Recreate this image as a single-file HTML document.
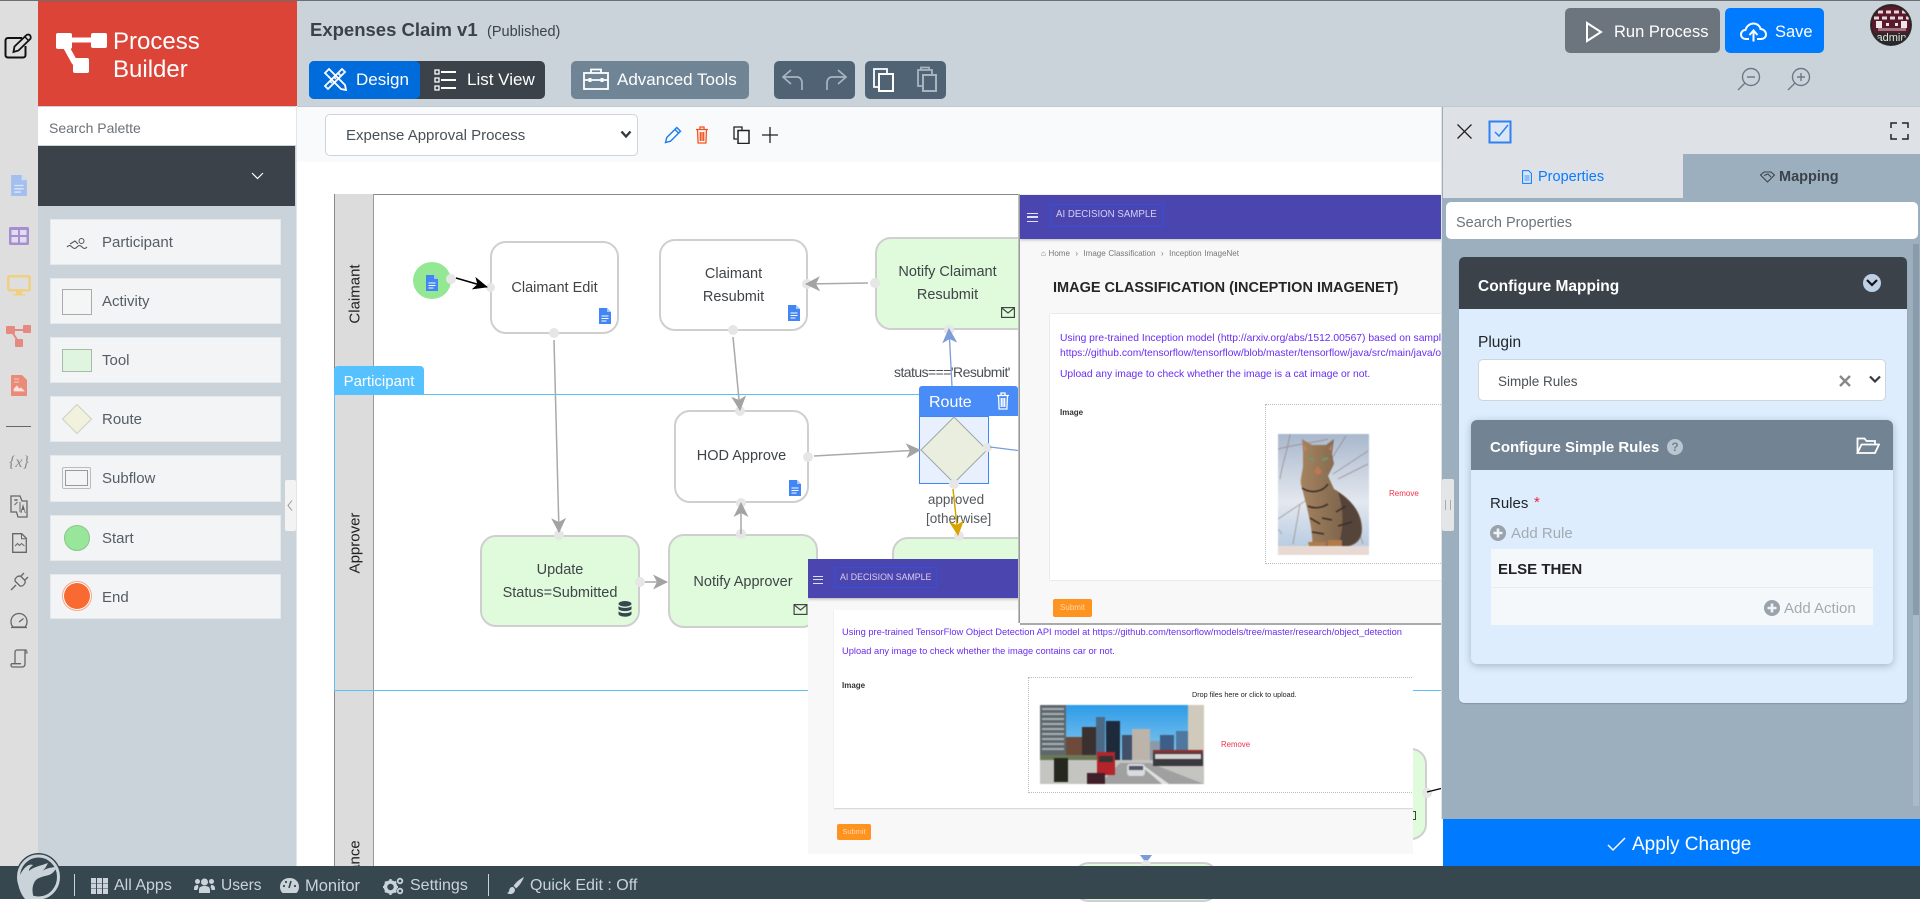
<!DOCTYPE html>
<html><head><meta charset="utf-8"><title>Process Builder</title>
<style>
*{box-sizing:border-box}
html,body{margin:0;padding:0;width:1920px;height:899px;overflow:hidden;background:#fff;font-family:"Liberation Sans",sans-serif}
.a{position:absolute;white-space:nowrap}
.btn{border-radius:5px;color:#fff}
.pal{position:absolute;left:50px;width:231px;background:#f2f4f6;box-shadow:0 0 0 1px #e6e9ec inset;color:#555d64;font-size:15px}
.pal span{position:absolute;left:52px;top:1px;line-height:46px}
.node{position:absolute;border:2.500px solid #cfcfcf;border-radius:16px;background:#fff;color:#3f4448;font-size:14.500px;text-align:center;line-height:23px}
.g{background:#e0fbdc}
.pt{position:absolute;width:10px;height:10px;border-radius:50%;background:#e6e6e6}
.pur{color:#6a2df0}
</style></head>
<body>
<svg width="0" height="0" style="position:absolute">
<defs>
<symbol id="doc" viewBox="0 0 12 16"><path d="M0 0h8l4 4v12H0z" fill="#4285f4"/><path d="M8 0v4h4z" fill="#a9c6fa"/><path d="M2.500 8h7M2.500 10.500h7M2.500 13h5" stroke="#fff" stroke-width="1"/></symbol>
<symbol id="env" viewBox="0 0 14 11"><rect x=".6" y=".6" width="12.8" height="9.8" fill="none" stroke="#444" stroke-width="1.2"/><path d="M.6.8 7 6 13.4.8" fill="none" stroke="#444" stroke-width="1.2"/></symbol>
<symbol id="trash" viewBox="0 0 14 18"><path d="M1 3.500h12M5 3.500V1h4v2.500M2.500 3.500l.6 13.500h7.800l.6-13.500M5.300 6v9M7 6v9M8.700 6v9" fill="none" stroke="currentColor" stroke-width="1.300"/></symbol>
<symbol id="plusc" viewBox="0 0 16 16"><circle cx="8" cy="8" r="8" fill="#9aa3ab"/><path d="M8 3.500v9M3.500 8h9" stroke="#eef3f7" stroke-width="2.600"/></symbol>
<marker id="mg" markerUnits="userSpaceOnUse" markerWidth="16" markerHeight="16" refX="14" refY="8" orient="auto"><path d="M0 0.500 15 8 0 15.500 4 8z" fill="#a3a3a3"/></marker>
<marker id="mk" markerUnits="userSpaceOnUse" markerWidth="16" markerHeight="16" refX="14" refY="8" orient="auto"><path d="M0 1.500 15 8 0 14.500 4 8z" fill="#000"/></marker>
<marker id="mb" markerUnits="userSpaceOnUse" markerWidth="16" markerHeight="16" refX="14" refY="8" orient="auto"><path d="M0 0.500 15 8 0 15.500 4 8z" fill="#7a9cd8"/></marker>
<marker id="my" markerUnits="userSpaceOnUse" markerWidth="16" markerHeight="16" refX="14" refY="8" orient="auto"><path d="M0 0.500 15 8 0 15.500 4 8z" fill="#d9a400"/></marker>
</defs>
</svg>

<!-- canvas -->
<div class="a" style="left:297px;top:107px;width:1150px;height:760px;background:#fff"></div>
<div class="a" style="left:297px;top:107px;width:1150px;height:55px;background:#f9fafc"></div>
<div class="a" style="left:296px;top:107px;width:1px;height:760px;background:#e3e6e9"></div>

<!-- pool -->
<div class="a" style="left:334px;top:194px;width:1110px;height:1px;background:#888"></div>
<div class="a" style="left:334px;top:194px;width:40px;height:672px;background:#dcdcdc;border-left:1px solid #888;border-right:1px solid #999"></div>
<div class="a" style="left:355px;top:294px;transform:translate(-50%,-50%) rotate(-90deg);font-size:15px;color:#222">Claimant</div>
<div class="a" style="left:355px;top:543px;transform:translate(-50%,-50%) rotate(-90deg);font-size:15px;color:#222">Approver</div>
<div class="a" style="left:334px;top:837px;width:40px;height:29px;overflow:hidden"><div class="a" style="left:21px;top:30px;transform:translate(-50%,-50%) rotate(-90deg);font-size:15px;color:#222">Finance</div></div>
<div class="a" style="left:334px;top:394px;width:1110px;height:1px;background:#5bc0f5"></div>
<div class="a" style="left:334px;top:690px;width:1110px;height:1px;background:#5bc0f5"></div>
<div class="a" style="left:334px;top:394px;width:1px;height:297px;background:#5bc0f5"></div>
<div class="a" style="left:334px;top:366px;width:90px;height:29px;background:#55c1ff;border-radius:4px 4px 0 0;color:#fff;font-size:15px;line-height:31px;text-align:center">Participant</div>

<!-- nodes -->
<div class="node" style="left:490px;top:241px;width:129px;height:93px;padding-top:34px">Claimant Edit</div>
<div class="node" style="left:659px;top:239px;width:149px;height:92px;padding-top:22px">Claimant<br>Resubmit</div>
<div class="node g" style="left:875px;top:237px;width:160px;height:93px;padding:22px 15px 0 0">Notify Claimant<br>Resubmit</div>
<div class="node" style="left:674px;top:410px;width:135px;height:93px;padding-top:33px">HOD Approve</div>
<div class="node g" style="left:480px;top:535px;width:160px;height:92px;padding-top:22px">Update<br>Status=Submitted</div>
<div class="node g" style="left:668px;top:534px;width:150px;height:94px;padding-top:35px">Notify Approver</div>
<div class="node g" style="left:892px;top:537px;width:160px;height:60px"></div>
<div class="node g" style="left:1073px;top:862px;width:146px;height:40px"></div>
<div class="node g" style="left:1380px;top:748px;width:47px;height:92px"></div>

<!-- start -->
<div class="a" style="left:413px;top:262px;width:38px;height:37px;border-radius:50%;background:#94e894"></div>
<svg class="a" style="left:426px;top:275px" width="12" height="16"><use href="#doc"/></svg>
<div class="pt" style="left:446px;top:274px"></div>
<div class="pt" style="left:486px;top:283px;width:9px;height:9px"></div>
<div class="pt" style="left:549px;top:328px"></div>
<div class="pt" style="left:554px;top:530px"></div>
<div class="pt" style="left:635px;top:577px"></div>
<div class="pt" style="left:802px;top:279px"></div>
<div class="pt" style="left:728px;top:325px"></div>
<div class="pt" style="left:870px;top:278px"></div>
<div class="pt" style="left:944px;top:325px"></div>
<div class="pt" style="left:735px;top:406px"></div>
<div class="pt" style="left:803px;top:452px"></div>
<div class="pt" style="left:736px;top:498px"></div>
<div class="pt" style="left:736px;top:529px"></div>
<svg class="a" style="left:599px;top:308px" width="12" height="16"><use href="#doc"/></svg>
<svg class="a" style="left:788px;top:305px" width="12" height="16"><use href="#doc"/></svg>
<svg class="a" style="left:789px;top:480px" width="12" height="16"><use href="#doc"/></svg>
<svg class="a" style="left:1001px;top:307px" width="14" height="11"><use href="#env"/></svg>
<svg class="a" style="left:793px;top:604px" width="15" height="11"><use href="#env"/></svg>
<svg class="a" style="left:618px;top:601px" width="14" height="16" viewBox="0 0 14 16"><ellipse cx="7" cy="2.800" rx="6.500" ry="2.800" fill="#37474f"/><path d="M.5 5c2 2.500 11 2.500 13 0v3.200c-2 2.500-11 2.500-13 0zM.5 10.300c2 2.500 11 2.500 13 0v3c-2 3.300-11 3.300-13 0z" fill="#37474f"/></svg>

<!-- labels -->
<div class="a" style="left:894px;top:364px;font-size:14px;color:#4b5055;letter-spacing:-.55px">status==='Resubmit'</div>
<div class="a" style="left:926px;top:490px;width:60px;text-align:center;font-size:13.500px;color:#55595d;line-height:19px">approved<br>[otherwise]</div>

<!-- route -->
<div class="a" style="left:919px;top:416px;width:70px;height:68px;background:#e8f0fe;border:1px solid #4285f4"></div>
<svg class="a" style="left:919px;top:414px" width="70" height="72"><path d="M35 3 68 36 35 69 2 36z" fill="#e9eedf" stroke="#a2a6a8"/></svg>
<div class="pt" style="left:949px;top:479px"></div>
<div class="pt" style="left:983px;top:443px;width:9px;height:9px"></div>
<div class="pt" style="left:954px;top:531px"></div>

<!-- connectors above the ports -->
<svg class="a" style="left:0;top:0" width="1445" height="899">
<line x1="456" y1="278" x2="487" y2="287" stroke="#000" stroke-width="1.500" marker-end="url(#mk)"/>
<line x1="554" y1="340" x2="559" y2="532" stroke="#a9a9a9" stroke-width="1.500" marker-end="url(#mg)"/>
<line x1="868" y1="283" x2="806" y2="284" stroke="#a9a9a9" stroke-width="1.500" marker-end="url(#mg)"/>
<line x1="733" y1="337" x2="740" y2="410" stroke="#a9a9a9" stroke-width="1.500" marker-end="url(#mg)"/>
<line x1="814" y1="456" x2="920" y2="450" stroke="#a9a9a9" stroke-width="1.500" marker-end="url(#mg)"/>
<line x1="645" y1="582" x2="667" y2="582" stroke="#a9a9a9" stroke-width="1.500" marker-end="url(#mg)"/>
<line x1="741" y1="534" x2="741" y2="503" stroke="#a9a9a9" stroke-width="1.500" marker-end="url(#mg)"/>
<line x1="952" y1="386" x2="949" y2="329" stroke="#7a9cd8" stroke-width="1.300" marker-end="url(#mb)"/>
<line x1="990" y1="447" x2="1022" y2="451" stroke="#7a9cd8" stroke-width="1.300"/>
<line x1="953" y1="489" x2="958" y2="535" stroke="#d9a400" stroke-width="1.500" marker-end="url(#my)"/>
</svg>
<div class="a" style="left:919px;top:386px;width:99px;height:30px;background:#4a8cf7;border-radius:3px 3px 0 0;color:#fff;font-size:16px;line-height:33px;padding-left:10px">Route</div>
<svg class="a" style="left:996px;top:392px;color:#fff" width="14" height="18"><use href="#trash"/></svg>

<!-- overlay 2 -->
<div class="a" style="left:808px;top:559px;width:605px;height:295px;background:#f8f8f8;overflow:hidden;filter:blur(.35px)">
  <div class="a" style="left:0;top:0;width:605px;height:39px;background:#4b45b0;box-shadow:0 1px 3px rgba(0,0,0,.3)"></div>
  <div class="a" style="left:5px;top:17px;width:10px;height:8px;border-top:1.500px solid #dfe0f5;border-bottom:1.500px solid #dfe0f5"><div style="height:1.500px;background:#dfe0f5;margin-top:1.800px"></div></div>
  <div class="a" style="left:26px;top:8px;width:103px;height:21px;border:1.500px solid #3050e0;color:#d2d2f2;font-size:8.800px;line-height:18px;padding-left:5px">AI DECISION SAMPLE</div>
  <div class="a" style="left:26px;top:51px;width:579px;height:198px;background:#fff;box-shadow:0 1px 1px rgba(0,0,0,.15)"></div>
  <div class="a pur" style="left:34px;top:68px;font-size:9.300px">Using pre-trained TensorFlow Object Detection API model at https://github.com/tensorflow/models/tree/master/research/object_detection</div>
  <div class="a pur" style="left:34px;top:87px;font-size:9.300px">Upload any image to check whether the image contains car or not.</div>
  <div class="a" style="left:34px;top:122px;font-size:8px;font-weight:bold;color:#333">Image</div>
  <div class="a" style="left:220px;top:118px;width:400px;height:116px;border:1px dotted #bbb"></div>
  <div class="a" style="left:384px;top:131px;font-size:7.200px;color:#222">Drop files here or click to upload.</div>
  <svg class="a" style="left:232px;top:146px;filter:blur(.4px)" width="164" height="79" viewBox="0 0 164 79">
    <defs><linearGradient id="sky" x1="0" y1="0" x2="0" y2="1"><stop offset="0" stop-color="#2e9ce8"/><stop offset="1" stop-color="#b8e0f2"/></linearGradient></defs>
    <rect width="164" height="79" fill="url(#sky)"/>
    <rect x="0" y="0" width="26" height="60" fill="#5e686c"/>
    <path d="M2 4h22M2 9h22M2 14h22M2 19h22M2 24h22M2 29h22M2 34h22M2 39h22M2 44h22" stroke="#a8b2b6" stroke-width="2"/>
    <rect x="148" y="0" width="16" height="55" fill="#cfcabc"/><rect x="136" y="26" width="12" height="32" fill="#4f78a0"/>
    <rect x="66" y="16" width="14" height="42" fill="#1d2a3a"/><rect x="56" y="12" width="9" height="44" fill="#4a6a88"/>
    <rect x="26" y="32" width="16" height="26" fill="#6e4a3a"/><rect x="42" y="22" width="14" height="34" fill="#3a3030"/>
    <rect x="82" y="30" width="10" height="28" fill="#405068"/><rect x="92" y="24" width="18" height="34" fill="#bcb4aa"/><rect x="110" y="36" width="10" height="22" fill="#8a9aa8"/><rect x="120" y="30" width="14" height="28" fill="#3c5e88"/>
    <rect y="55" width="164" height="24" fill="#c4c4c0"/><path d="M60 79 80 58h30l54 21z" fill="#a0a0a0"/><path d="M122 79 100 60l3 0 26 19z" fill="#e0e0e0"/>
    <rect x="0" y="50" width="58" height="5" fill="#6a7858"/>
    <rect x="57" y="47" width="18" height="23" fill="#b4242a"/><rect x="59" y="51" width="14" height="6" fill="#333"/>
    <rect x="113" y="45" width="50" height="16" fill="#3a3a3e"/><rect x="115" y="49" width="46" height="5" fill="#d4d4d4"/><rect x="113" y="45" width="50" height="3" fill="#8a3030"/>
    <rect x="87" y="59" width="18" height="12" rx="3" fill="#d8dce0"/><rect x="89" y="61" width="14" height="4" fill="#556"/>
    <rect x="14" y="53" width="14" height="24" fill="#25281f"/><rect x="47" y="68" width="18" height="11" fill="#402028"/>
  </svg>
  <div class="a" style="left:413px;top:181px;font-size:7.800px;color:#f0304a">Remove</div>
  <div class="a" style="left:29px;top:265px;width:34px;height:16px;background:#ff9320;border-radius:2px;color:#ffd9a8;font-size:7.500px;line-height:16px;text-align:center">Submit</div>
</div>
<svg class="a" style="left:1139px;top:853px" width="14" height="10"><path d="M1 2h12L7 10z" fill="#7a9cd8"/></svg>
<div class="pt" style="left:1141px;top:860px"></div>
<div class="pt" style="left:1422px;top:788px"></div>
<svg class="a" style="left:1425px;top:785px" width="18" height="12"><path d="M2 7 16 3.500" stroke="#000" stroke-width="1.300"/></svg>
<div class="a" style="left:1413px;top:811px;width:3px;height:9px;border:1px solid #444;border-left:0"></div>

<!-- overlay 1 -->
<div class="a" style="left:1020px;top:194px;width:422px;height:429px;background:#f8f8f8;box-shadow:-1px 0 0 #9a9a9a,-2px 0 0 #c0c0c0,0 2px 0 #aaa;overflow:hidden">
  <div style="position:absolute;left:0;top:0;width:422px;height:429px;filter:blur(.35px)">
  <div class="a" style="left:0;top:1px;width:422px;height:44px;background:#4b45b0;box-shadow:0 1px 3px rgba(0,0,0,.25)"></div>
  <div class="a" style="left:7px;top:19px;width:11px;height:9px;border-top:1.500px solid #dfe0f5;border-bottom:1.500px solid #dfe0f5"><div style="height:1.500px;background:#dfe0f5;margin-top:2px"></div></div>
  <div class="a" style="left:30px;top:10px;width:114px;height:23px;border:1.500px solid #3050e0;color:#d2d2f2;font-size:9.700px;line-height:20px;padding-left:5px">AI DECISION SAMPLE</div>
  <div class="a" style="left:21px;top:55px;font-size:8px;color:#777;word-spacing:.5px">&#8962; Home &nbsp;&#8250;&nbsp; Image Classification &nbsp;&#8250;&nbsp; Inception ImageNet</div>
  <div class="a" style="left:33px;top:86px;font-size:14.500px;font-weight:bold;color:#262626">IMAGE CLASSIFICATION (INCEPTION IMAGENET)</div>
  <div class="a" style="left:30px;top:120px;width:392px;height:266px;background:#fff;box-shadow:0 0 1px rgba(0,0,0,.3)"></div>
  <div class="a pur" style="left:40px;top:139px;font-size:10.300px">Using pre-trained Inception model (http://arxiv.org/abs/1512.00567) based on sample at</div>
  <div class="a pur" style="left:40px;top:154px;font-size:10.300px">https://github.com/tensorflow/tensorflow/blob/master/tensorflow/java/src/main/java/org/tensorflow/examples</div>
  <div class="a pur" style="left:40px;top:175px;font-size:10.300px">Upload any image to check whether the image is a cat image or not.</div>
  <div class="a" style="left:40px;top:214px;font-size:8px;font-weight:bold;color:#333">Image</div>
  <div class="a" style="left:245px;top:210px;width:200px;height:160px;border:1px dotted #bbb"></div>
  <svg class="a" style="left:258px;top:240px;filter:blur(.5px)" width="91" height="121" viewBox="0 0 91 121">
    <defs><linearGradient id="bgc" x1="0" y1="0" x2="0" y2="1"><stop offset="0" stop-color="#a9b8ce"/><stop offset=".6" stop-color="#e4e8ef"/><stop offset="1" stop-color="#b8cce2"/></linearGradient>
    <linearGradient id="fur" x1="0" y1="0" x2="1" y2="0"><stop offset="0" stop-color="#a5835f"/><stop offset="1" stop-color="#6e5845"/></linearGradient></defs>
    <rect width="91" height="113" fill="url(#bgc)"/>
    <g stroke="#8a7a72" stroke-width="1" fill="none" opacity=".6"><path d="M0 15C20 10 40 8 50 5M12 0C10 15 4 30 2 45M68 2 50 30M90 17 55 40M90 30 60 45M0 85 30 65M4 100 0 95M22 70 15 110M75 80 85 110"/></g>
    <path d="M25 18 24 5 34 11h14L56 5 54 20 56 30 50 42 56 55C68 62 84 75 84 95 84 108 76 113 62 113H34C36 98 28 70 24 54 21 47 24 42 25 32z" fill="url(#fur)"/>
    <path d="M25 10 29 15 27 17zM54 10 51 15 53 17z" fill="#c9806a"/>
    <path d="M60 58C75 68 84 80 83 100 78 112 68 113 60 113 66 95 66 75 60 58z" fill="#54443a"/>
    <path d="M24 54C33 60 45 58 50 50M30 72C36 75 44 74 50 70M32 84 42 90M44 84 54 86M34 98 46 100M58 78 68 72M60 92 74 88" stroke="#3a2e26" stroke-width="1.600" fill="none"/>
    <path d="M31 24 36 26M44 26 50 24" stroke="#6a9a70" stroke-width="2.500"/>
    <path d="M40 32 36 38 40 41 44 38z" fill="#c07850"/>
    <path d="M30 108 48 108 46 116H32zM50 106 64 106 64 113 50 114z" fill="#b07a4a"/>
    <rect y="112" width="91" height="9" fill="#e8dad2"/>
  </svg>
  <div class="a" style="left:369px;top:295px;font-size:8px;color:#f0304a">Remove</div>
  <div class="a" style="left:33px;top:405px;width:39px;height:18px;background:#ff9320;border-radius:2px;color:#ffd9a8;font-size:8px;line-height:18px;text-align:center">Submit</div>
  </div>
</div>

<!-- toolbar select -->
<div class="a" style="left:325px;top:114px;width:313px;height:42px;background:#fff;border:1px solid #ced4da;border-radius:5px;color:#495057;font-size:15px;line-height:42px;padding-left:20px">Expense Approval Process</div>
<svg class="a" style="left:620px;top:130px" width="12" height="9"><path d="M1.500 1.500 6 6.500 10.500 1.500" fill="none" stroke="#343a40" stroke-width="2.400"/></svg>
<svg class="a" style="left:664px;top:126px" width="18" height="18" viewBox="0 0 18 18"><path d="M1.500 16.500 2.800 11.500 12.800 1.500 16.500 5.200 6.500 15.200zM11 3.500 14.500 7" fill="none" stroke="#1a7bf0" stroke-width="1.400"/></svg>
<svg class="a" style="left:695px;top:126px;color:#f4511e" width="14" height="18"><use href="#trash"/></svg>
<svg class="a" style="left:733px;top:126px" width="18" height="18" viewBox="0 0 18 18"><path d="M4 13H1V1h8v3" fill="none" stroke="#222" stroke-width="1.300"/><rect x="5" y="4.500" width="11" height="13" fill="none" stroke="#222" stroke-width="1.500"/></svg>
<svg class="a" style="left:762px;top:127px" width="16" height="16"><path d="M8 0v16M0 8h16" stroke="#222" stroke-width="1.300"/></svg>

<!-- header -->
<div class="a" style="left:297px;top:1px;width:1623px;height:106px;background:#cbd3da;border-bottom:1px solid #c2c9d0"></div>
<div class="a" style="left:0;top:0;width:1920px;height:1px;background:#6a6f74"></div>
<div class="a" style="left:310px;top:18px;font-size:18.500px;font-weight:bold;color:#3b4249;line-height:24px">Expenses Claim v1</div>
<div class="a" style="left:487px;top:23px;font-size:14.500px;color:#3b4249;line-height:18px">(Published)</div>
<div class="a" style="left:309px;top:61px;width:236px;height:38px;border-radius:5px;background:#3b4249"></div>
<div class="a btn" style="left:309px;top:61px;width:111px;height:38px;background:#006cdc;font-size:17px;line-height:37px;padding-left:47px">Design</div>
<svg class="a" style="left:323px;top:67px" width="24" height="24" viewBox="0 0 24 24"><path d="M2 6 6 2 22 18 23 23 18 22zM15 6 18 9" fill="none" stroke="#fff" stroke-width="1.800"/><path d="M19 2 22 5 5 22 2 19zM7 14l2 2M11 10l2 2M15 6l2 2" fill="none" stroke="#fff" stroke-width="1.800"/></svg>
<div class="a" style="left:467px;top:61px;font-size:17px;line-height:37px;color:#fff">List View</div>
<svg class="a" style="left:434px;top:69px" width="22" height="22" viewBox="0 0 22 22"><path d="M7 3h15M7 11h15M7 19h15" stroke="#fff" stroke-width="2"/><path d="M1 1h4v4H1zM1 9h4v4H1zM1 17h4v4H1z" fill="none" stroke="#fff" stroke-width="1.300"/></svg>
<div class="a btn" style="left:571px;top:61px;width:178px;height:38px;background:#6f8494;font-size:17px;line-height:37px;padding-left:46px">Advanced Tools</div>
<svg class="a" style="left:583px;top:68px" width="26" height="22" viewBox="0 0 26 22"><rect x="1" y="5" width="24" height="16" fill="none" stroke="#fff" stroke-width="1.800"/><path d="M8 5V1.500h10V5M1 12h24" fill="none" stroke="#fff" stroke-width="1.800"/><rect x="5.500" y="10" width="3" height="4" fill="#fff"/><rect x="17.500" y="10" width="3" height="4" fill="#fff"/></svg>
<div class="a btn" style="left:774px;top:61px;width:81px;height:38px;background:#4f6374"></div>
<svg class="a" style="left:781px;top:68px" width="24" height="24" viewBox="0 0 24 24"><path d="M10 2 2 9l8 7M2 9h14c3 0 5 2.500 5 6v7" fill="none" stroke="#a9b4bf" stroke-width="1.700"/></svg>
<svg class="a" style="left:824px;top:68px" width="24" height="24" viewBox="0 0 24 24"><path d="M14 2l8 7-8 7M22 9H8c-3 0-5 2.500-5 6v7" fill="none" stroke="#a9b4bf" stroke-width="1.700"/></svg>
<div class="a btn" style="left:865px;top:61px;width:81px;height:38px;background:#4f6374"></div>
<svg class="a" style="left:873px;top:68px" width="24" height="24" viewBox="0 0 24 24"><path d="M6 19H1V1h13v5" fill="none" stroke="#fff" stroke-width="1.800"/><rect x="6" y="6" width="14" height="17" fill="none" stroke="#fff" stroke-width="2"/></svg>
<svg class="a" style="left:916px;top:66px" width="24" height="26" viewBox="0 0 24 26"><path d="M7 20H2V4h14v5M5 4h8V1.500H5z" fill="none" stroke="#a9b4bf" stroke-width="1.800"/><rect x="7" y="9" width="13" height="16" fill="none" stroke="#a9b4bf" stroke-width="2"/></svg>

<div class="a btn" style="left:1565px;top:8px;width:155px;height:45px;background:#6c757d;font-size:16.500px;line-height:48px;padding-left:49px">Run Process</div>
<svg class="a" style="left:1584px;top:21px" width="20" height="22" viewBox="0 0 20 22"><path d="M3 2 17 11 3 20z" fill="none" stroke="#fff" stroke-width="2"/></svg>
<div class="a btn" style="left:1725px;top:8px;width:99px;height:45px;background:#007bff;font-size:16.500px;line-height:48px;padding-left:50px">Save</div>
<svg class="a" style="left:1740px;top:22px" width="27" height="20" viewBox="0 0 27 20"><path d="M9 17H6C3 17 1 15 1 12.500 1 10 3 8 5.500 8 6.500 4 10 1.500 13.500 1.500 17 1.500 20 4 20.500 7 23.500 7 26 9.500 26 12.500 26 15 24 17 21 17H17" fill="none" stroke="#fff" stroke-width="2"/><path d="M13.500 19.500V9M9.500 13l4-4.500 4 4.500" fill="none" stroke="#fff" stroke-width="2"/></svg>
<div class="a" style="left:1871px;top:5px;width:40px;height:40px;border-radius:50%;background:#5a1a2a;border:1px solid #222;overflow:hidden;box-shadow:0 0 0 1px #333">
 <svg class="a" style="left:0;top:0" width="40" height="40"><path d="M2 12h36M6 6h28" stroke="#e4d6dc" stroke-width="3" stroke-dasharray="5 3"/><rect x="4" y="15" width="6" height="7" fill="#efe6ea"/><rect x="29" y="15" width="6" height="7" fill="#efe6ea"/><rect x="14" y="17" width="3" height="3" fill="#efe6ea"/><rect x="23" y="17" width="3" height="3" fill="#efe6ea"/><rect x="6" y="22" width="28" height="3" fill="#e4d6dc" opacity=".5"/></svg>
 <div class="a" style="left:0;top:27px;width:40px;height:13px;background:#2a2a2a"></div>
 <div class="a" style="left:0;top:26px;width:39px;text-align:center;font-size:11px;color:#e6e6e6;line-height:13px">admin</div>
</div>
<svg class="a" style="left:1737px;top:67px" width="25" height="24" viewBox="0 0 25 24"><circle cx="14" cy="10" r="8.500" fill="none" stroke="#6c7a88" stroke-width="1.400"/><path d="M8 16 1 23M10 10h8" stroke="#6c7a88" stroke-width="1.400"/></svg>
<svg class="a" style="left:1787px;top:67px" width="25" height="24" viewBox="0 0 25 24"><circle cx="14" cy="10" r="8.500" fill="none" stroke="#6c7a88" stroke-width="1.400"/><path d="M8 16 1 23M10 10h8M14 6v8" stroke="#6c7a88" stroke-width="1.400"/></svg>

<!-- left rail -->
<div class="a" style="left:0;top:1px;width:38px;height:866px;background:#dedede"></div>
<svg class="a" style="left:4px;top:32px" width="30" height="27" viewBox="0 0 30 27"><path d="M18 6H4C2.500 6 1.500 7 1.500 8.500V23c0 1.500 1 2.500 2.500 2.500h15c1.500 0 2.500-1 2.500-2.500v-9" fill="none" stroke="#111" stroke-width="2"/><path d="M10.500 14.500 22 3.500c1-1 3-1.500 4-.2s1 3 0 4L14.500 18.500 9.500 20z" fill="none" stroke="#111" stroke-width="1.800"/><path d="M21 5 25 9" stroke="#111" stroke-width="1.500"/></svg>
<svg class="a" style="left:11px;top:175px" width="16" height="21" viewBox="0 0 12 16"><path d="M0 0h8l4 4v12H0z" fill="#a3bfee"/><path d="M8 0v4h4z" fill="#cfdcf5"/><path d="M2.500 8h7M2.500 10.500h7M2.500 13h5" stroke="#dfe8f8"/></svg>
<svg class="a" style="left:9px;top:227px" width="20" height="18"><rect width="20" height="18" rx="1.500" fill="#a58fd0"/><path d="M2.500 3h6.500v5H2.500zM11 3h6.500v5H11zM2.500 10h6.500v5.500H2.500zM11 10h6.500v5.500H11z" fill="#e2dcef"/></svg>
<svg class="a" style="left:7px;top:275px" width="24" height="21" viewBox="0 0 24 21"><rect x="1.300" y="1.300" width="21.400" height="14" rx="1.500" fill="none" stroke="#f0cf80" stroke-width="2.500"/><path d="M9 16h6v3h3v1.500H6V19h3z" fill="#f0cf80"/></svg>
<svg class="a" style="left:6px;top:325px" width="26" height="22" viewBox="0 0 26 22"><rect x="0" y="1" width="9" height="8" rx="1" fill="#e48a80"/><rect x="17" y="0" width="8" height="8" rx="1" fill="#e48a80"/><rect x="9" y="14" width="8" height="8" rx="1" fill="#e48a80"/><path d="M8 5h10M6 7l6 9" stroke="#e48a80" stroke-width="2"/></svg>
<svg class="a" style="left:11px;top:375px" width="16" height="21" viewBox="0 0 16 21"><path d="M0 1a1 1 0 0 1 1-1h10l5 5v15a1 1 0 0 1-1 1H1a1 1 0 0 1-1-1z" fill="#ea8a78"/><path d="M3 4h5M3 7h5M3 14l3-3 2 3 2-1 3 3H3z" stroke="#fbe2dc" fill="#fbe2dc" stroke-width=".8"/></svg>
<div class="a" style="left:6px;top:426px;width:25px;height:1px;background:#666"></div>
<div class="a" style="left:9px;top:454px;font-size:16px;font-style:italic;color:#8a8a8a;font-family:'Liberation Serif',serif">{x}</div>
<svg class="a" style="left:10px;top:495px" width="18" height="23" viewBox="0 0 18 23"><path d="M1 1h9l2 5h5v16H8l-1.500-5H1z" fill="none" stroke="#666" stroke-width="1.300"/><path d="M4 5h4M6 4v2M4.500 10l3-3M10 7v10" stroke="#666"/><path d="M13 9 10.500 18h1l.7-3h2l.6 3h1z" fill="#666"/></svg>
<svg class="a" style="left:12px;top:533px" width="15" height="20" viewBox="0 0 15 20"><path d="M.7.7h9l4.600 4.600v14H.7z" fill="none" stroke="#666" stroke-width="1.300"/><path d="M9.500.7v5h5M3 13l2.500-2.500 2 2 2-2 3 2.500" fill="none" stroke="#666"/></svg>
<svg class="a" style="left:10px;top:572px" width="19" height="19" viewBox="0 0 19 19"><path d="M1 18 6 13M5 9l5 5c2 .5 4-1 5-3 .5-1 0-2.500-.5-3L11 4.500C10 4 8.500 4 7.500 4.500 6 5.500 4.800 7 5 9zM11 4 14 1M15 8l3-3" fill="none" stroke="#666" stroke-width="1.300"/></svg>
<svg class="a" style="left:10px;top:612px" width="18" height="17" viewBox="0 0 18 17"><path d="M3 15C1.500 13.500 1 11.500 1 9.500 1 5 4.500 1.500 9 1.500S17 5 17 9.500c0 2-.5 4-2 5.500z" fill="none" stroke="#666" stroke-width="1.300"/><path d="M1 15.500h16M9 10l4.500-3.500M5 8h.1M9 4.500h.1M4 11h.1" stroke="#666" stroke-width="1.300"/></svg>
<svg class="a" style="left:10px;top:649px" width="18" height="19" viewBox="0 0 18 19"><path d="M5 15V3c0-1 .8-2 2-2h9.500c-1 0-1.500 1-1.500 2v12c0 1.500-1 3-2.500 3H2.500C1.500 18 1 17 1 16s.5-1.300 1.300-1.300H11" fill="none" stroke="#666" stroke-width="1.300"/><path d="M15 1c1 0 2 .8 2 2v1h-2" fill="none" stroke="#666"/></svg>

<!-- logo -->
<div class="a" style="left:38px;top:1px;width:259px;height:105px;background:#dc4438"></div>
<svg class="a" style="left:38px;top:1px" width="80" height="80"><path d="M24 39H60" stroke="#fff" stroke-width="5" fill="none"/><path d="M26 42 37 62" stroke="#fff" stroke-width="6" fill="none"/><rect x="18" y="32" width="16" height="16" rx="2" fill="#fff"/><rect x="53" y="32" width="16" height="15" rx="2" fill="#fff"/><rect x="35" y="57" width="16" height="15" rx="2" fill="#fff"/></svg>
<div class="a" style="left:113px;top:28px;font-size:24px;line-height:28px;color:#fff">Process<br>Builder</div>

<!-- palette -->
<div class="a" style="left:38px;top:106px;width:258px;height:761px;background:#cbd3da"></div>
<div class="a" style="left:38px;top:107px;width:258px;height:38px;background:#fff;font-size:14px;line-height:43px;padding-left:11px;color:#6b7177">Search Palette</div>
<div class="a" style="left:38px;top:146px;width:257px;height:60px;background:#3b4249"></div>
<svg class="a" style="left:251px;top:172px" width="13" height="8"><path d="M1 1 6.500 6.500 12 1" fill="none" stroke="#fff" stroke-width="1.200"/></svg>

<div class="pal" style="top:219px;height:46px"><span>Participant</span><svg class="a" style="left:16px;top:18px" width="22" height="13" viewBox="0 0 22 13"><path d="M1 10c2-2 3-2 5 0s3 2 5 0 3-2 5 0 3 2 5 0M4 7l5-3 3 3" fill="none" stroke="#555" stroke-width="1.100"/><circle cx="15.500" cy="4" r="2.500" fill="none" stroke="#555"/></svg></div>
<div class="pal" style="top:278px;height:46px"><span>Activity</span><div class="a" style="left:12px;top:11px;width:30px;height:26px;background:#f4f5f5;border:1px solid #aaa"></div></div>
<div class="pal" style="top:337px;height:46px"><span>Tool</span><div class="a" style="left:12px;top:12px;width:30px;height:23px;background:#dff5e0;border:1px solid #a9b9a9"></div></div>
<div class="pal" style="top:396px;height:46px"><span>Route</span><svg class="a" style="left:12px;top:8px" width="30" height="30"><path d="M15 .5 29.500 15 15 29.500.5 15z" fill="#f0f2dd" stroke="#cdd0c4"/></svg></div>
<div class="pal" style="top:455px;height:47px"><span>Subflow</span><div class="a" style="left:12px;top:12px;width:29px;height:22px;border:1px solid #bbb;border-radius:2px"><div style="margin:2px;height:16px;border:1px solid #999"></div></div></div>
<div class="pal" style="top:515px;height:46px"><span>Start</span><div class="a" style="left:14px;top:10px;width:26px;height:26px;border-radius:50%;background:#98e69a;border:1px solid #8cc48c"></div></div>
<div class="pal" style="top:574px;height:45px"><span>End</span><div class="a" style="left:14px;top:9px;width:26px;height:26px;border-radius:50%;background:#f86a32;box-shadow:0 0 0 1px #fff,0 0 0 2px #f5a78a"></div></div>
<div class="a" style="left:285px;top:480px;width:11px;height:51px;background:#f3f3f3;border-radius:2px"></div>
<svg class="a" style="left:287px;top:500px" width="6" height="11"><path d="M5 .5 1 5.500 5 10.500" fill="none" stroke="#999"/></svg>

<!-- right panel -->
<div class="a" style="left:1442px;top:107px;width:478px;height:712px;background:#9cafbf;box-shadow:-1px 0 0 #e0e3e6"></div>
<div class="a" style="left:1443px;top:107px;width:477px;height:47px;background:#dee2e6"></div>
<div class="a" style="left:1443px;top:154px;width:240px;height:44px;background:#dee2e6;color:#0a7bff;font-size:14.500px;line-height:46px;padding-left:95px">Properties</div>
<svg class="a" style="left:1522px;top:170px" width="10" height="14" viewBox="0 0 10 14"><path d="M.6.6h6l2.800 2.800v10H.6z" fill="#dae6f8" stroke="#0a7bff" stroke-width="1"/><path d="M2.500 6h5M2.500 8h5M2.500 10h5" stroke="#0a7bff" stroke-width=".8"/></svg>
<div class="a" style="left:1683px;top:154px;width:236px;height:44px;background:#9cafbf;border-radius:5px 0 0 0;color:#3b4249;font-size:14.500px;font-weight:bold;line-height:46px;padding-left:96px">Mapping</div>
<svg class="a" style="left:1760px;top:171px" width="15" height="12" viewBox="0 0 15 12"><path d="M.5 4 4 1h7l3.500 3-7 7z" fill="none" stroke="#3b4249" stroke-width="1.100"/><path d="M4 4.500 8 3l3 3" fill="none" stroke="#3b4249" stroke-width="1"/></svg>
<svg class="a" style="left:1457px;top:124px" width="15" height="15"><path d="M.5.500l14 14M14.500.500l-14 14" stroke="#222" stroke-width="1.300"/></svg>
<svg class="a" style="left:1488px;top:120px" width="24" height="24" viewBox="0 0 24 24"><rect x="1.500" y="1.500" width="21" height="21" fill="#dbe6f6" stroke="#2f80f0" stroke-width="2"/><path d="M7 12l4 4 9-11" fill="none" stroke="#2f80f0" stroke-width="1.500"/></svg>
<svg class="a" style="left:1890px;top:122px" width="19" height="18"><path d="M1 6V1h6M12 1h6v5M18 12v5h-6M7 17H1v-5" fill="none" stroke="#222" stroke-width="1.500"/></svg>
<div class="a" style="left:1446px;top:202px;width:472px;height:37px;background:#fff;border-radius:5px;color:#6c757d;font-size:14.500px;line-height:42px;padding-left:10px">Search Properties</div>

<div class="a" style="left:1913px;top:244px;width:6px;height:371px;background:#8a9cac"></div>
<div class="a" style="left:1913px;top:615px;width:6px;height:191px;background:#a9bac8"></div>

<div class="a" style="left:1459px;top:257px;width:448px;height:446px;background:#deedfe;border-radius:5px;box-shadow:0 1px 1px rgba(0,0,0,.15)"></div>
<div class="a" style="left:1459px;top:257px;width:448px;height:52px;background:#3b4249;border-radius:5px 5px 0 0;color:#fff;font-size:15.500px;font-weight:bold;line-height:60px;padding-left:19px">Configure Mapping</div>
<div class="a" style="left:1863px;top:274px;width:18px;height:18px;border-radius:50%;background:#bdd0e6"></div>
<svg class="a" style="left:1866px;top:279px" width="12" height="8"><path d="M1 1 6 6l5-5" fill="none" stroke="#111" stroke-width="2.200"/></svg>
<div class="a" style="left:1478px;top:333px;font-size:15.500px;color:#212529;line-height:20px">Plugin</div>
<div class="a" style="left:1478px;top:359px;width:408px;height:42px;background:#fff;border:1px solid #ced4da;border-radius:5px;font-size:13.500px;color:#495057;line-height:43px;padding-left:19px">Simple Rules</div>
<svg class="a" style="left:1839px;top:375px" width="12" height="12"><path d="M1 1l10 10M11 1 1 11" stroke="#888" stroke-width="2.400"/></svg>
<svg class="a" style="left:1869px;top:375px" width="12" height="9"><path d="M1 1.500 6 6.500 11 1.500" fill="none" stroke="#343a40" stroke-width="2.200"/></svg>

<div class="a" style="left:1471px;top:420px;width:422px;height:244px;background:#deedfe;border-radius:6px;box-shadow:0 2px 8px rgba(60,80,100,.35)"></div>
<div class="a" style="left:1471px;top:420px;width:422px;height:50px;background:#728494;border-radius:6px 6px 0 0;color:#fff;font-size:15px;font-weight:bold;line-height:56px;padding-left:19px">Configure Simple Rules</div>
<div class="a" style="left:1667px;top:439px;width:16px;height:16px;border-radius:50%;background:#b9c5cf;color:#728494;font-size:12px;font-weight:bold;line-height:16px;text-align:center">?</div>
<svg class="a" style="left:1856px;top:436px" width="24" height="20" viewBox="0 0 24 20"><path d="M1.500 17V2.500h7l2 2.500H19v3M1.500 17 5.500 8.500H23L19 17z" fill="none" stroke="#fff" stroke-width="1.800"/></svg>
<div class="a" style="left:1490px;top:494px;font-size:15px;color:#212529;line-height:20px">Rules</div>
<div class="a" style="left:1534px;top:493px;font-size:15px;color:#f0243c;line-height:20px">*</div>
<svg class="a" style="left:1490px;top:525px" width="16" height="16"><use href="#plusc"/></svg>
<div class="a" style="left:1511px;top:524px;font-size:15px;color:#a3abb2;line-height:20px">Add Rule</div>
<div class="a" style="left:1491px;top:549px;width:382px;height:76px;background:#f4f8fa"></div>
<div class="a" style="left:1491px;top:587px;width:382px;height:1px;background:#e5ebef"></div>
<div class="a" style="left:1498px;top:560px;font-size:15px;font-weight:bold;color:#222;line-height:20px">ELSE THEN</div>
<svg class="a" style="left:1764px;top:600px" width="16" height="16"><use href="#plusc"/></svg>
<div class="a" style="left:1784px;top:599px;font-size:15px;color:#a3abb2;line-height:20px">Add Action</div>

<div class="a" style="left:1443px;top:819px;width:477px;height:47px;background:#007bff;color:#fff;font-size:19px;line-height:52px;padding-left:189px">Apply Change</div>
<svg class="a" style="left:1607px;top:837px" width="19" height="15"><path d="M1 8l5 5L18 1" fill="none" stroke="#fff" stroke-width="1.500"/></svg>
<div class="a" style="left:1442px;top:479px;width:12px;height:52px;background:#e3e5e7;border-radius:2px"></div>
<div class="a" style="left:1445px;top:500px;width:6px;height:10px;border-left:1.500px solid #a5abb0;border-right:1.500px solid #a5abb0"></div>

<!-- bottom bar -->
<div class="a" style="left:0;top:866px;width:1920px;height:33px;background:#37474f"></div>
<svg class="a" style="left:14px;top:852px" width="49" height="47" viewBox="0 0 49 47">
<ellipse cx="24.500" cy="24" rx="22.500" ry="23" fill="#37474f"/>
<ellipse cx="24.500" cy="25" rx="20" ry="21" fill="none" stroke="#cbd3da" stroke-width="3"/>
<path d="M4 28C8 17 14 11 19 13 17 15 15 16 15 19 19 15 26 14 34 11 32 15 31 17 28 19 33 16 39 15 43 15 41 19 38 22 35 23 27 25 22 26 20 31 18 35 18 40 20 47H11C6 41 4 34 4 28z" fill="#cbd3da"/>
</svg>
<div class="a" style="left:74px;top:874px;width:1px;height:22px;background:#cbd3da"></div>
<div class="a" style="left:488px;top:874px;width:1px;height:22px;background:#cbd3da"></div>
<svg class="a" style="left:91px;top:878px" width="17" height="16"><path d="M0 0h5v5H0zM6 0h5v5H6zM12 0h5v5h-5zM0 5.500h5v5H0zM6 5.500h5v5H6zM12 5.500h5v5h-5zM0 11h5v5H0zM6 11h5v5H6zM12 11h5v5h-5z" fill="#cbd3da"/></svg>
<div class="a" style="left:114px;top:876px;font-size:16px;color:#cbd3da;line-height:20px">All Apps</div>
<svg class="a" style="left:194px;top:878px" width="21" height="15" viewBox="0 0 21 15"><circle cx="10.500" cy="4" r="3.500" fill="#cbd3da"/><circle cx="3.500" cy="3.500" r="2.500" fill="#cbd3da"/><circle cx="17.500" cy="3.500" r="2.500" fill="#cbd3da"/><path d="M5 15v-3c0-3 2-4 5.500-4S16 9 16 12v3zM0 11c0-3 1-4 4-4 0 1 .5 2 .5 2C4 10 3.500 11 3.500 12H0zM21 11c0-3-1-4-4-4 0 1-.5 2-.5 2 .5 1 1 2 1 3H21z" fill="#cbd3da"/></svg>
<div class="a" style="left:221px;top:876px;font-size:15.500px;color:#cbd3da;line-height:20px">Users</div>
<svg class="a" style="left:280px;top:877px" width="19" height="17" viewBox="0 0 19 17"><path d="M2.500 16C1 14.500 0 12.500 0 10 0 4.500 4 1 9.500 1S19 4.500 19 10c0 2.500-1 4.500-2.500 6z" fill="#cbd3da"/><path d="M9 11 11 4" stroke="#37474f" stroke-width="1.600"/><circle cx="4" cy="9" r="1.100" fill="#37474f"/><circle cx="6" cy="5" r="1.100" fill="#37474f"/><circle cx="15" cy="9" r="1.100" fill="#37474f"/></svg>
<div class="a" style="left:305px;top:876px;font-size:16.500px;color:#cbd3da;line-height:20px">Monitor</div>
<svg class="a" style="left:383px;top:877px" width="21" height="18" viewBox="0 0 21 18"><circle cx="7.500" cy="10" r="5" fill="none" stroke="#cbd3da" stroke-width="3.500"/><path d="M7.500 2v3M7.500 15v3M0 10h3M12 10h3M2.200 4.700l2 2M11 13.500l2 2M2.200 15.300l2-2M11 6.500l2-2" stroke="#cbd3da" stroke-width="2.200"/><circle cx="17" cy="4" r="2.300" fill="none" stroke="#cbd3da" stroke-width="1.800"/><circle cx="17" cy="14" r="2.300" fill="none" stroke="#cbd3da" stroke-width="1.800"/></svg>
<div class="a" style="left:410px;top:876px;font-size:16px;color:#cbd3da;line-height:20px">Settings</div>
<svg class="a" style="left:507px;top:877px" width="18" height="18" viewBox="0 0 18 18"><path d="M17 0C13 2 9 5 6.500 9c1 .5 2 1.500 2.500 2.500C12 9 15 5 17 0zM5.500 10C3 10 2.500 12 2 14c0 1-1 1.500-2 2 2 1.500 5.500 1.500 7-.5.800-1 1.300-2.500.7-3.500-.4-1-1.200-2-2.200-2z" fill="#cbd3da"/></svg>
<div class="a" style="left:530px;top:876px;font-size:16px;color:#cbd3da;line-height:20px">Quick Edit : Off</div>
</body></html>
